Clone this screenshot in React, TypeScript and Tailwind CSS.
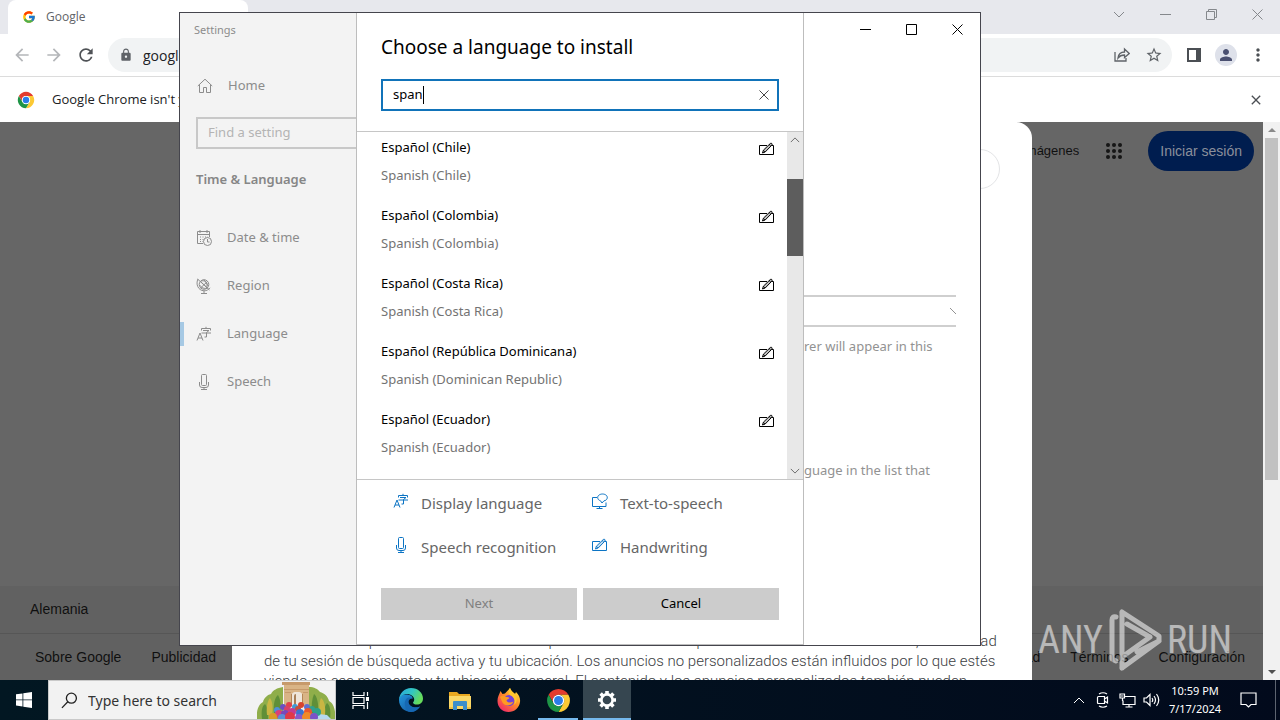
import React from "react";
import { FcGoogle } from "react-icons/fc";
import { MdLock, MdRefresh, MdStarBorder, MdPerson, MdMoreVert, MdArrowBack, MdArrowForward, MdClose } from "react-icons/md";

type IconProps = { className?: string };

const stroke = { fill: "none", stroke: "currentColor", strokeWidth: 1 } as const;

function CloseIcon({ className }: IconProps) {
  return (
    <svg viewBox="0 0 11 11" className={className} {...stroke}>
      <path d="M.5.5l10 10M10.5.5l-10 10" />
    </svg>
  );
}

function MinimizeIcon({ className }: IconProps) {
  return (
    <svg viewBox="0 0 11 11" className={className} {...stroke}>
      <path d="M0 5.5h11" />
    </svg>
  );
}

function MaximizeIcon({ className }: IconProps) {
  return (
    <svg viewBox="0 0 11 11" className={className} {...stroke}>
      <path d="M.5.5h10v10h-10z" />
    </svg>
  );
}

function RestoreIcon({ className }: IconProps) {
  return (
    <svg viewBox="0 0 11 11" className={className} {...stroke}>
      <path d="M.5 2.5h8v8h-8zM2.5 2.5v-2h8v8h-2" />
    </svg>
  );
}

function ChevronIcon({ className }: IconProps) {
  return (
    <svg viewBox="0 0 12 7" className={className} {...stroke}>
      <path d="M1 1l5 5 5-5" />
    </svg>
  );
}

function PenIcon({ className }: IconProps) {
  return (
    <svg viewBox="0 0 16 14" className={className} {...stroke}>
      <path d="M8 3.500H.5v9h14v-9h-1.500" />
      <path d="M3.500 11l.9-2.800 6.900-6.700c1-.9 2.500.5 1.600 1.600L6.200 10z" fill="currentColor" fillOpacity=".25" />
      <path d="M4.500 8.400l1.500 1.500M10.200 2.600l1.600 1.600" />
    </svg>
  );
}

function LanguageIcon({ className }: IconProps) {
  return (
    <svg viewBox="0 0 16 16" className={className} {...stroke}>
      <path d="M1 14.500l3-7.500 3 7.500M2 12h4" />
      <path d="M5.500 4.500v-2h9v2M10 .8v1.700M7 4.500h6l-2.500 2M5.500 7h9.500M10.500 6.500v4.500h-2" />
    </svg>
  );
}

function MicIcon({ className }: IconProps) {
  return (
    <svg viewBox="0 0 16 16" className={className} {...stroke}>
      <path d="M5.500 1.500q0-1 1-1h3q1 0 1 1v9q0 1-1 1h-3q-1 0-1-1zM3.500 8v3q0 2.500 2.500 2.500h4q2.500 0 2.500-2.500V8M8 13.500v2M5 15.500h6" />
    </svg>
  );
}

function SpeakIcon({ className }: IconProps) {
  return (
    <svg viewBox="0 0 16 16" className={className} {...stroke}>
      <path d="M5 4.500H.5v9h13.500v-4M7.500 13.500v2M4.500 15.500h6" />
      <path d="M8.500 7.800C5.500 7 5 4 6.500 2.500c2-2 6-2 8 0 1.700 2 .5 5-2.500 5.300L10 10z" />
    </svg>
  );
}

function HomeIcon({ className }: IconProps) {
  return (
    <svg viewBox="0 0 16 16" className={className} {...stroke}>
      <path d="M.8 8L8 1.200 15.200 8M2.500 6.800v7.700h4v-5h3v5h4V6.800" />
    </svg>
  );
}

function DateIcon({ className }: IconProps) {
  return (
    <svg viewBox="0 0 16 16" className={className} {...stroke}>
      <path d="M7 13.500H1.500v-12h12V7M1.500 4.500h12M4 0v3M11 0v3" />
      <path d="M4 7h8M4 9.500h4M4 11.500h3" strokeDasharray="1 1.500" />
      <circle cx="11.500" cy="11.500" r="4" />
      <path d="M11.500 9v3h2" />
    </svg>
  );
}

function RegionIcon({ className }: IconProps) {
  return (
    <svg viewBox="0 0 16 16" className={className} {...stroke}>
      <circle cx="8" cy="6.500" r="4.800" />
      <path d="M2 1C-.5 6 2 12.500 8 12.800c2.500 0 4.500-1 6-3M1.500 1l12 11M4.500 3.500l7 6.500M11.500 3.500L4.500 10M8 2c3 2 4 6 2 9M3.500 7c2 3 5 4 8 3M5 3c3-1 6 1 7 5M8 13v2.500M5 15.500h6" />
    </svg>
  );
}

function SearchIcon({ className }: IconProps) {
  return (
    <svg viewBox="0 0 18 18" className={className} fill="none" stroke="currentColor" strokeWidth="1.400">
      <circle cx="11" cy="6.500" r="5.300" />
      <path d="M7.200 10.400L1 16.800" />
    </svg>
  );
}

function AppsIcon({ className }: IconProps) {
  return (
    <svg viewBox="0 0 16 16" className={className} fill="currentColor">
      {[2, 8, 14].map((y) => [2, 8, 14].map((x) => <circle key={`${x}-${y}`} cx={x} cy={y} r="2" />))}
    </svg>
  );
}

function ChromeLogo({ className }: IconProps) {
  return (
    <svg viewBox="0 0 24 24" className={className}>
      <path fill="#e33b2e" d="M2.500 6.500A11 11 0 0 1 21.500 6.500H12A5.500 5.500 0 0 0 7.240 14.750Z" />
      <path fill="#fcc934" d="M21.500 6.500A11 11 0 0 1 12 23L16.760 14.750A5.500 5.500 0 0 0 12 6.500Z" />
      <path fill="#1e9446" d="M12 23A11 11 0 0 1 2.500 6.500L7.240 14.750A5.500 5.500 0 0 0 16.760 14.750Z" />
      <circle cx="12" cy="12" r="5.500" fill="#fff" />
      <circle cx="12" cy="12" r="4.300" fill="#2b7de9" />
    </svg>
  );
}

function EdgeLogo({ className }: IconProps) {
  return (
    <svg viewBox="0 0 24 24" className={className}>
      <defs>
        <linearGradient id="edgeTop" x1="0" y1="0" x2="1" y2=".4">
          <stop offset="0" stopColor="#2aa5dd" />
          <stop offset=".55" stopColor="#32c6c4" />
          <stop offset="1" stopColor="#66dc5c" />
        </linearGradient>
        <linearGradient id="edgeLow" x1="0" y1="0" x2="1" y2="1">
          <stop offset="0" stopColor="#2396dc" />
          <stop offset="1" stopColor="#124f99" />
        </linearGradient>
      </defs>
      <path fill="url(#edgeLow)" d="M0 12C0 8 4 6 8 6.500c4 .5 6 2 5.500 4.500-2-1.500-5 1-4 4 1 3.500 6 6 11.500 3.500C19 22 15.500 24 12 24 5.500 24 0 19 0 12z" />
      <path fill="#1668b3" d="M9.500 9.500C5 10.500 4 19 9.500 23.500 14 25 19 22 21 18.500c-6 2.500-12-1-11.500-5 .2-1.800 1.800-3.200 3.500-3-.8-.8-2-1.200-3.500-1z" />
      <path fill="url(#edgeTop)" d="M0 12C.3 5 5.500 0 12 0c7 0 12 5 12 10.500 0 4-3 6-6 6-2.500 0-4-1-4-1.800 0-.7 1.200-1 1.200-3.200C15.200 8.500 12 6 8 6 4 6 1 8.500 0 12z" />
    </svg>
  );
}

function FolderLogo({ className }: IconProps) {
  return (
    <svg viewBox="0 0 22 19" className={className}>
      <path fill="#e9a820" d="M0 1h8l2 2h11v4H0z" />
      <path fill="#fbd867" d="M0 5h22v13H0z" />
      <path fill="#3d8fcb" d="M4 11q0-1 1-1h12q1 0 1 1v8h-4v-4H8v4H4z" />
      <path fill="#f2c344" d="M0 16h4v2H0zM18 16h4v2h-4z" />
    </svg>
  );
}

function FirefoxLogo({ className }: IconProps) {
  return (
    <svg viewBox="0 0 24 24" className={className}>
      <defs>
        <linearGradient id="fox" x1=".9" y1=".1" x2=".2" y2="1">
          <stop offset="0" stopColor="#ffe13c" />
          <stop offset=".45" stopColor="#ff8a28" />
          <stop offset="1" stopColor="#f0246c" />
        </linearGradient>
      </defs>
      <path fill="url(#fox)" d="M3.500 3l2 3 2.500-.5C9.500 3.500 11 2.500 13 0c1 3 3 4 5 6l1-2c3 3 4.500 6 4 10-.8 6-5.500 10-11.500 10S.5 19.500.5 13C.5 9 2 7 3.500 3z" />
      <circle cx="12" cy="12.500" r="5.500" fill="#7341d8" />
      <path fill="#ff9b22" d="M3 9c3-2 5-1 6 0 1.500.2 3 0 3.500 1-1 1.200-2.500 1-3 2.500 1 2.500 4.500 2.500 7 1-2 5-8.500 5-11 1z" />
      <path fill="#ffc62e" d="M13 0c1 3 3 4 5 6 3 4 2 9-1 11 2-4 0-8-4-10-2-2-2-4 0-7z" />
    </svg>
  );
}

function GearLogo({ className }: IconProps) {
  return (
    <svg viewBox="-10 -10 20 20" className={className} fill="none" stroke="#fff">
      <circle r="5.600" strokeWidth="2.600" />
      <g strokeWidth="3.600">
        <path d="M0-6V-9M0 6V9M-6 0H-9M6 0H9M4.300-4.300L6.400-6.400M-4.300 4.300L-6.400 6.400M4.300 4.300L6.400 6.400M-4.300-4.300L-6.400-6.400" />
      </g>
    </svg>
  );
}

function ArchPicture({ className }: IconProps) {
  const balls: [number, number, number, string][] = [
    [26, 26, 3, "#6b4fc0"], [32, 24, 3, "#e0434a"], [38, 26, 3, "#3f9bd6"], [44, 24, 3, "#d8432e"], [50, 26, 3, "#5f6fd0"],
    [20, 29, 3, "#4f8fd6"], [30, 28, 3, "#d94068"], [41, 28, 3, "#c8503a"], [55, 28, 3, "#2fa090"],
    [22, 33, 4, "#d93f78"], [28, 33, 4, "#7a48b8"], [35, 31, 4, "#c43b90"], [43, 32, 4, "#3a72d0"], [51, 31, 4, "#e8562e"], [60, 31, 4, "#2fa08a"],
    [16, 36, 4, "#d89a28"], [25, 37, 4, "#5c8fd6"], [33, 36, 5, "#e03a46"], [42, 37, 4, "#8a58c8"], [50, 36, 5, "#f08a28"], [57, 36, 4, "#7b52c8"],
  ];
  return (
    <svg viewBox="0 0 78 38" className={className}>
      <path fill="#8fae4a" d="M0 38c-1-9 2-15 6-17 1-4 4-7 8-8 2-4 6-6 12-7v32zM78 38c1-10-2-16-6-18-1-5-5-8-9-9-2-3-6-5-11-5v32z" />
      <path fill="#5f8f38" d="M5 38c-1-8 0-13 3-15 3 4 3 10 3 15zM17 32c-1-9 1-16 4-18 3 5 3 12 2 18zM73 38c1-8 0-14-3-16-3 4-3 10-3 16zM61 32c1-9-1-17-4-19-2 5-3 12-2 19z" />
      <path fill="#c9b643" d="M10 34c-1-9 1-15 3-17 3 4 3 11 2 17zM68 34c1-9-1-15-4-17-2 4-2 11-1 17z" />
      <path fill="#d9b486" d="M27 4h25v21h-7V14q0-3-5-3t-5 3v11h-8z" />
      <path fill="#c79a6b" d="M25 1h28v3H25zM27 8h25v1H27zM28 11h6v1h-6zM46 11h5v1h-5z" />
      <path fill="#b58656" d="M34 25V13h1v12zM45 25V13h1v12z" />
      <path fill="#efe6da" d="M35 14q0-3 5-3t5 3v11H35z" />
      <path fill="#a88058" d="M37 24V15q0-2 2-2v11z" />
      <path fill="#b5d8ee" d="M54 38l8-5 8 1 4 4z" />
      {balls.map(([x, y, r, c], i) => (
        <circle key={i} cx={x} cy={y} r={r} fill={c} />
      ))}
    </svg>
  );
}

function BrowserWindow() {
  return (
    <div className="relative flex min-h-0 flex-1 flex-col bg-white font-['Open_Sans',sans-serif] text-[#202124]">
      <div className="flex h-[34px] shrink-0 bg-[#e7e8ed] pl-2">
        <div className="flex w-60 items-center gap-2.5 rounded-t-lg bg-white pl-3.5 text-[12px] text-[#5f6368]">
          <FcGoogle className="size-3.5" />
          <span>Google</span>
        </div>
        <button aria-label="New tab" className="w-11 text-center text-lg">+</button>
        <div className="ml-auto flex text-[#85888c]">
          <button aria-label="Search tabs" className="flex h-7 w-[46px] items-center justify-center"><ChevronIcon className="w-3" /></button>
          <button aria-label="Minimize browser" className="flex h-7 w-[46px] items-center justify-center"><MinimizeIcon className="size-[11px]" /></button>
          <button aria-label="Restore browser" className="flex h-7 w-[46px] items-center justify-center"><RestoreIcon className="size-[11px]" /></button>
          <button aria-label="Close browser" className="flex h-7 w-[46px] items-center justify-center"><CloseIcon className="size-[11px]" /></button>
        </div>
      </div>

      <div className="flex h-[43px] shrink-0 items-center border-b border-[#dcdcdc] pr-1.5 pl-1.5">
        <button aria-label="Back" className="flex w-8 justify-center text-[#b4b6b9]"><MdArrowBack className="size-5" /></button>
        <button aria-label="Forward" className="flex w-8 justify-center text-[#b4b6b9]"><MdArrowForward className="size-5" /></button>
        <button aria-label="Reload" className="flex w-8 justify-center text-[#4f5256]"><MdRefresh className="size-5" /></button>
        <div className="ml-1.5 flex h-[34px] flex-1 items-center rounded-full bg-[#f1f3f4] pr-0.5 pl-[11px] text-[#5f6368]">
          <MdLock className="size-3.5" />
          <input aria-label="Address" defaultValue="google.com" className="ml-2.5 flex-1 bg-transparent text-[14px] text-[#202124] outline-none" />
          <button aria-label="Share" className="flex w-8 justify-center">
            <svg viewBox="0 0 16 16" className="size-4" fill="none" stroke="currentColor" strokeWidth="1.300">
              <path d="M1 5v9h11v-3M4 11c.5-4 3-6 6.500-6V2l4.700 4.500-4.700 4V8C7.500 8 5.500 9 4 11z" />
            </svg>
          </button>
          <button aria-label="Bookmark" className="flex w-8 justify-center"><MdStarBorder className="size-[18px]" /></button>
        </div>
        <button aria-label="Side panel" className="ml-1.5 flex w-8 justify-center text-[#4b4f54]">
          <svg viewBox="0 0 14 14" className="size-3.5">
            <path d="M1 1h12v12H1z" fill="none" stroke="currentColor" strokeWidth="2" />
            <path d="M9 1h4v12H9z" fill="currentColor" />
          </svg>
        </button>
        <button aria-label="Profile" className="mx-[5px] flex size-[22px] items-center justify-center rounded-full bg-[#dee1ea] text-[#4a5070]"><MdPerson className="size-[18px]" /></button>
        <button aria-label="Menu" className="flex w-8 justify-center text-[#4b4f54]"><MdMoreVert className="size-5" /></button>
      </div>

      <div className="flex h-[45px] shrink-0 items-center pr-4 pl-[17px] text-[13px]">
        <ChromeLogo className="size-[18px]" />
        <span className="ml-[17px]">Google Chrome isn't your default browser</span>
        <button aria-label="Dismiss" className="ml-auto text-[#4b4f54]"><MdClose className="size-4" /></button>
      </div>

      <div className="flex min-h-0 flex-1">
        <div className="relative flex flex-1 flex-col bg-[#666] font-['Liberation_Sans',sans-serif] text-[14px] text-black/85">
          <header className="flex items-center justify-end pt-[9px] pr-[9px]">
            <a href="#imagenes" className="text-[13px]">Imágenes</a>
            <AppsIcon className="mr-[26px] ml-[27px] size-4 text-[#161616]" />
            <a href="#entrar" className="flex h-10 items-center rounded-full bg-[#001d4f] px-3 text-[#8a8f9b]">Iniciar sesión</a>
          </header>
          <footer className="mt-auto bg-[#616161]">
            <p className="flex h-12 items-center border-b border-[#565656] pl-[30px]">Alemania</p>
            <nav className="flex h-[46px] items-center gap-[30px] pr-[18px] pl-[35px]">
              <a href="#sobre">Sobre Google</a>
              <a href="#publicidad">Publicidad</a>
              <a href="#privacidad" className="ml-auto">Privacidad</a>
              <a href="#terminos">Términos</a>
              <a href="#config">Configuración</a>
            </nav>
          </footer>

          <section className="absolute inset-y-0 left-[232px] flex w-[800px] flex-col justify-between overflow-hidden rounded-t-2xl bg-white px-8 pt-[27px] text-[#3c4043]">
            <button aria-label="Idioma" className="h-10 w-24 self-end rounded-full border border-[#e3e4e6]" />
            <p className="h-[49px] overflow-hidden font-['Roboto',sans-serif] text-[15px] leading-5 font-light whitespace-pre">
              {"El contenido no personalizado está influido por todo el contenido que estés viendo en ese momento, la actividad\nde tu sesión de búsqueda activa y tu ubicación. Los anuncios no personalizados están influidos por lo que estés\nviendo en ese momento y tu ubicación general. El contenido y los anuncios personalizados también pueden"}
            </p>
          </section>
        </div>
        <div className="flex w-[17px] flex-col items-center bg-[#f1f1f1] py-1.5 text-[#8a8a8a]">
          <svg viewBox="0 0 8 4" className="h-1 w-2"><path d="M0 4l4-4 4 4z" fill="currentColor" /></svg>
          <div className="mt-1.5 h-[342px] w-[13px] bg-[#c1c1c1]" />
          <svg viewBox="0 0 8 4" className="mt-auto h-1 w-2 text-[#505050]"><path d="M0 0l4 4 4-4z" fill="currentColor" /></svg>
        </div>
      </div>
    </div>
  );
}

const languages = [
  ["Español (Chile)", "Spanish (Chile)"],
  ["Español (Colombia)", "Spanish (Colombia)"],
  ["Español (Costa Rica)", "Spanish (Costa Rica)"],
  ["Español (República Dominicana)", "Spanish (Dominican Republic)"],
  ["Español (Ecuador)", "Spanish (Ecuador)"],
];

const features = [
  { label: "Display language", Icon: LanguageIcon },
  { label: "Text-to-speech", Icon: SpeakIcon },
  { label: "Speech recognition", Icon: MicIcon },
  { label: "Handwriting", Icon: PenIcon },
];

function LanguageDialog() {
  return (
    <section role="dialog" aria-label="Choose a language to install" className="flex w-[448px] shrink-0 flex-col border-x border-b border-[#bdbdbd] bg-white">
      <header className="border-b border-[#c6c6c6] px-6 pt-5 pb-5">
        <h1 className="text-[19px] leading-7 text-black">Choose a language to install</h1>
        <div className="mt-[18px] flex h-8 items-center border-2 border-[#1173b9] pr-2 pl-2.5">
          <input aria-label="Language name" defaultValue="span" className="field-sizing-content text-[13px] text-black outline-none" />
          <span className="h-[18px] w-px bg-black" />
          <button aria-label="Clear" className="ml-auto text-[#333]"><CloseIcon className="size-[10px]" /></button>
        </div>
      </header>
      <div className="flex h-[347px]">
        <ul className="flex-1 overflow-hidden">
          {languages.map(([native, english]) => (
            <li key={native} className="flex h-[68px] items-start justify-between pt-[5px] pr-3 pl-6 text-[13px] leading-5">
              <div>
                <p className="text-black">{native}</p>
                <p className="mt-2 text-[#737373]">{english}</p>
              </div>
              <PenIcon className="mt-[5px] h-3.5 w-4 text-black" />
            </li>
          ))}
        </ul>
        <div className="flex w-4 flex-col items-center bg-[#e8e8e8] py-[5px] text-[#555]">
          <ChevronIcon className="h-[6px] w-2.5 rotate-180" />
          <div className="mt-9 h-[77px] w-4 bg-[#5d5d5d]" />
          <ChevronIcon className="mt-auto h-[6px] w-2.5" />
        </div>
      </div>
      <div className="grid grid-cols-2 gap-y-5 border-t border-[#c6c6c6] px-6 pt-[11px]">
        {features.map(({ label, Icon }) => (
          <div key={label} className="flex h-6 items-center gap-3 pl-3 text-[15px] text-[#666]">
            <Icon className="mb-1 size-4 text-[#0c74c4]" />
            {label}
          </div>
        ))}
      </div>
      <div className="mt-auto flex gap-1.5 px-6 pb-6 text-[13px]">
        <button disabled className="h-8 flex-1 bg-[#ccc] text-[#808080]">Next</button>
        <button className="h-8 flex-1 bg-[#ccc] text-black">Cancel</button>
      </div>
    </section>
  );
}

const navItems = [
  { label: "Date & time", Icon: DateIcon, active: false },
  { label: "Region", Icon: RegionIcon, active: false },
  { label: "Language", Icon: LanguageIcon, active: true },
  { label: "Speech", Icon: MicIcon, active: false },
];

function SettingsWindow() {
  return (
    <div className="absolute top-3 left-[179px] flex h-[634px] w-[802px] border border-[#45454d] bg-white">
      <aside className="flex w-44 shrink-0 flex-col bg-[#f3f3f3] text-[13px] text-[#8c8c8c]">
        <p className="mt-2 pl-3.5 text-[11px] leading-[18px]">Settings</p>
        <a href="#home" className="mt-[37px] flex h-5 items-center gap-[15px] pl-[17px]">
          <HomeIcon className="size-4" />
          Home
        </a>
        <div className="mt-[21px] ml-4 flex h-8 items-center border-2 border-r-0 border-[#c8c8c8] pl-2.5">
          <input aria-label="Find a setting" placeholder="Find a setting" className="w-full outline-none placeholder:text-[#b4b4b4]" />
        </div>
        <h2 className="mt-5 pl-4 leading-5 font-semibold text-[#868686]">Time &amp; Language</h2>
        <nav className="mt-[25px]">
          {navItems.map(({ label, Icon, active }) => (
            <a key={label} href="#nav" className="flex h-12 items-center">
              <span className={active ? "h-6 w-1 bg-[#a6c9e4]" : "h-6 w-1"} />
              <Icon className="mr-[15px] ml-3 size-4" />
              {label}
            </a>
          ))}
        </nav>
      </aside>
      <LanguageDialog />
      <main className="flex min-w-0 flex-1 flex-col text-[13px] leading-5 text-[#929292]">
        <div className="flex justify-end text-black">
          <button aria-label="Minimize" className="flex h-8 w-[46px] items-center justify-center"><MinimizeIcon className="size-[11px]" /></button>
          <button aria-label="Maximize" className="flex h-8 w-[46px] items-center justify-center"><MaximizeIcon className="size-[11px]" /></button>
          <button aria-label="Close" className="flex h-8 w-[46px] items-center justify-center"><CloseIcon className="size-[11px]" /></button>
        </div>
        <div className="mt-[250px] mr-6 flex h-8 items-center justify-end border-y-2 border-[#cfcfcf]">
          <svg viewBox="0 0 6 6" className="size-1.5" {...stroke}><path d="M0 0l6 6" /></svg>
        </div>
        <p className="mt-[9px]">rer will appear in this</p>
        <p className="mt-[104px]">guage in the list that</p>
      </main>
    </div>
  );
}

function Watermark() {
  return (
    <div className="pointer-events-none absolute right-12 bottom-2 flex h-16 items-center gap-1 font-['Roboto_Condensed','Liberation_Sans_Narrow','Roboto',sans-serif] text-[38px] text-white/55">
      <span>ANY</span>
      <svg viewBox="0 0 56 64" className="h-16 w-14" fill="none" stroke="currentColor" strokeWidth="5" strokeLinejoin="round" strokeLinecap="round">
        <path d="M9 9Q5 8 5 12v39l4 2M15 4v45M15 4l37 24v5L30 44M15 60V49l28-20-23-13M15 60l37-27" />
      </svg>
      <span>RUN</span>
    </div>
  );
}

function Taskbar() {
  return (
    <div className="relative flex h-10 shrink-0 bg-linear-to-r from-[#021722] to-[#020a1c] text-white">
      <button aria-label="Start" className="flex w-12 items-center justify-center">
        <svg viewBox="0 0 16 16" className="size-4" fill="#fff">
          <path d="M0 2.300L6.500 1.400V7.500H0zM7.300 1.300L16 0v7.500H7.300zM0 8.300h6.500v6.100L0 13.500zM7.300 8.300H16V16l-8.700-1.300z" />
        </svg>
      </button>
      <label className="flex w-72 items-center border border-[#c9c9c9] bg-[#f2f2f2] pl-3 text-[#222]">
        <SearchIcon className="size-[17px] shrink-0" />
        <input aria-label="Search" placeholder="Type here to search" className="ml-2.5 min-w-0 flex-1 text-[14px] outline-none placeholder:text-[#333]" />
        <ArchPicture className="h-[38px] w-[78px] shrink-0" />
      </label>
      <div className="flex gap-px">
        <button aria-label="Task view" className="flex w-12 items-center justify-center">
          <svg viewBox="0 0 17 17" className="size-[17px]" fill="none" stroke="#fff" strokeWidth="1.200">
            <path d="M1 0v3.500h11V0M1 5.500h11v6H1zM1 17v-3.500h11V17M15.500 0v4M15.500 10v7" />
            <path d="M14.500 5.500h2v3h-2z" fill="#fff" />
          </svg>
        </button>
        <span className="w-px" />
        <button aria-label="Edge" className="flex w-12 items-center justify-center"><EdgeLogo className="size-6" /></button>
        <button aria-label="File Explorer" className="flex w-12 items-center justify-center"><FolderLogo className="h-[19px] w-[22px]" /></button>
        <button aria-label="Firefox" className="flex w-12 items-center justify-center"><FirefoxLogo className="size-6" /></button>
        <button aria-label="Chrome" className="flex w-12 flex-col items-center justify-between pt-2">
          <ChromeLogo className="size-[25px]" />
          <span className="h-0.5 w-10 bg-[#76b9ed]" />
        </button>
        <button aria-label="Settings" className="flex w-12 flex-col items-center justify-between bg-[#364650] pt-2.5">
          <GearLogo className="size-5" />
          <span className="h-0.5 w-12 bg-[#76b9ed]" />
        </button>
      </div>
      <div className="ml-auto flex items-center">
        <button aria-label="Hidden icons" className="flex w-6 justify-center"><ChevronIcon className="w-3 rotate-180" /></button>
        <button aria-label="Meet now" className="flex w-6 justify-center">
          <svg viewBox="0 0 14 16" className="h-4 w-3.5" fill="none" stroke="#fff" strokeWidth="1.200">
            <path d="M2.500 4.500h6v7h-6q-1 0-1-1v-5q0-1 1-1zM8.500 7l3-2v6l-3-2M3 2q4-2.500 8 0M3 14q4 2.500 8 0" />
          </svg>
        </button>
        <button aria-label="Network" className="flex w-6 justify-center">
          <svg viewBox="0 0 17 15" className="h-[15px] w-[17px]" fill="none" stroke="#fff" strokeWidth="1.200">
            <path d="M6 3.500h10v8H4v-4M10 11.500v2.500M6.500 14h7M1 1h4.500v4H1zM3.500 5v3M2 3h2.500" />
          </svg>
        </button>
        <button aria-label="Volume" className="flex w-6 justify-center">
          <svg viewBox="0 0 17 14" className="h-3.5 w-[17px]" fill="none" stroke="#fff" strokeWidth="1.200">
            <path d="M1 5h2.500L7 1.500v11L3.500 9H1zM9 5q1.500 2 0 4M11 3q3 4 0 8M13.500 1q4.500 6 0 12" />
          </svg>
        </button>
        <div className="w-16 text-center text-[11px] leading-[18px]">
          <p>10:59 PM</p>
          <p>7/17/2024</p>
        </div>
        <button aria-label="Notifications" className="flex w-[42px] justify-center">
          <svg viewBox="0 0 17 16" className="h-4 w-[17px]" fill="none" stroke="#fff" strokeWidth="1.200">
            <path d="M1 1h15v11.500h-5L8.500 15 6 12.500H1z" />
          </svg>
        </button>
        <span className="mr-1 ml-1.5 h-10 w-px bg-[#5d6470]" />
      </div>
    </div>
  );
}

export default function App() {
  return (
    <div className="flex h-screen flex-col overflow-hidden font-['Noto_Sans',sans-serif]">
      <div className="relative flex min-h-0 flex-1 flex-col">
        <BrowserWindow />
        <SettingsWindow />
        <Watermark />
      </div>
      <Taskbar />
    </div>
  );
}
